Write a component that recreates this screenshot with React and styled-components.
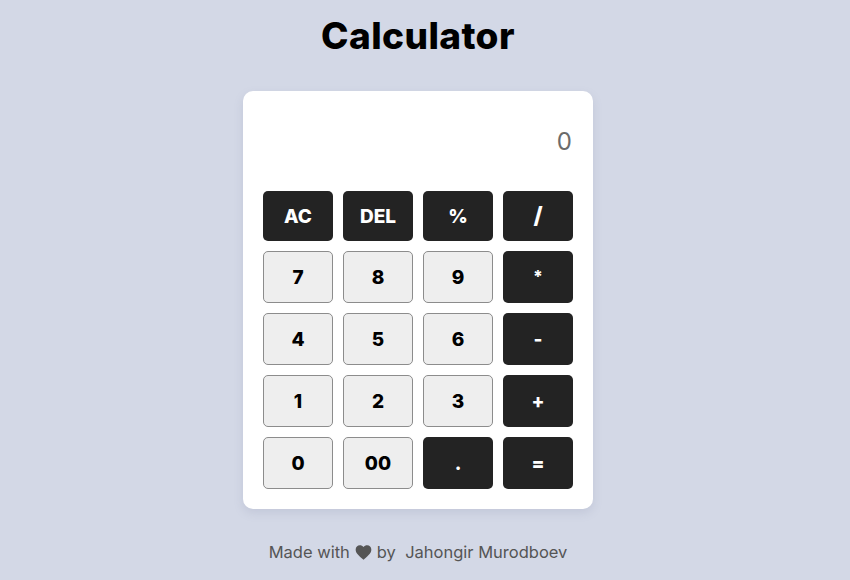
import React from "react";
import styled, { createGlobalStyle } from "styled-components";

const Global = createGlobalStyle`
  html, body { margin: 0; padding: 0; }
  body {
    background: #d3d8e6;
    font-family: "Inter", "Noto Sans", sans-serif;
    min-height: 580px;
  }
`;

const Page = styled.div`
  display: flex;
  flex-direction: column;
  align-items: center;
  padding-top: 14px;
  padding-right: 14px;
`;

const Title = styled.h1`
  margin: 0;
  font-size: 37px;
  line-height: 44px;
  font-weight: 800;
  color: #000;
  letter-spacing: 0.4px;
`;

const Card = styled.div`
  margin-top: 33px;
  width: 310px;
  padding: 20px;
  background: #fff;
  border-radius: 10px;
  box-shadow: 0 4px 10px rgba(120, 130, 160, 0.18);
`;

const Display = styled.div`
  height: 60px;
  margin-bottom: 20px;
  display: flex;
  align-items: center;
  justify-content: flex-end;
  padding-right: 1px;
  font-size: 24px;
  font-weight: 400;
  color: #6b6b6b;
`;

const Grid = styled.div`
  display: grid;
  grid-template-columns: repeat(4, 70px);
  column-gap: 10px;
  row-gap: 10px;
`;

const Key = styled.button`
  box-sizing: border-box;
  width: 70px;
  min-height: ${(p) => (p.$dark ? "50px" : "52px")};
  border-radius: 5px;
  border: ${(p) => (p.$dark ? "none" : "1px solid #8c8c8c")};
  background: ${(p) => (p.$dark ? "#232323" : "#eeeeee")};
  color: ${(p) => (p.$dark ? "#fff" : "#000")};
  font-family: "Inter", "Noto Sans", sans-serif;
  font-size: ${(p) => p.$size || "19px"};
  font-weight: 800;
  display: flex;
  align-items: center;
  justify-content: center;
  padding: 0;
  cursor: pointer;
`;

const Footer = styled.p`
  margin: 33px 0 0;
  font-size: 16.5px;
  color: #555;
  display: flex;
  align-items: center;
  gap: 4px;
`;

const Heart = styled.svg`
  width: 17px;
  height: 15px;
  margin: 0 1px;
`;

const keys = [
  ["AC", true], ["DEL", true], ["%", true], ["/", true, "23px"],
  ["7"], ["8"], ["9"], ["*", true, "17px"],
  ["4"], ["5"], ["6"], ["-", true],
  ["1"], ["2"], ["3"], ["+", true],
  ["0"], ["00"], [".", true], ["=", true],
];

export default function App() {
  return (
    <>
      <Global />
      <Page>
        <Title>Calculator</Title>
        <Card>
          <Display>0</Display>
          <Grid>
            {keys.map(([label, dark, size]) => (
              <Key key={label} $dark={dark} $size={size}>
                {label}
              </Key>
            ))}
          </Grid>
        </Card>
        <Footer>
          Made with
          <Heart viewBox="0 0 24 22" aria-hidden="true">
            <path
              d="M12 21.5 10.3 20C4.2 14.5 0.5 11.2 0.5 6.8 0.5 3.3 3.2 0.5 6.7 0.5c2 0 3.9.9 5.3 2.4C13.4 1.4 15.3.5 17.3.5c3.5 0 6.2 2.8 6.2 6.3 0 4.4-3.7 7.7-9.8 13.2L12 21.5z"
              fill="#555"
            />
          </Heart>
          by&nbsp;&nbsp;Jahongir Murodboev
        </Footer>
      </Page>
    </>
  );
}
